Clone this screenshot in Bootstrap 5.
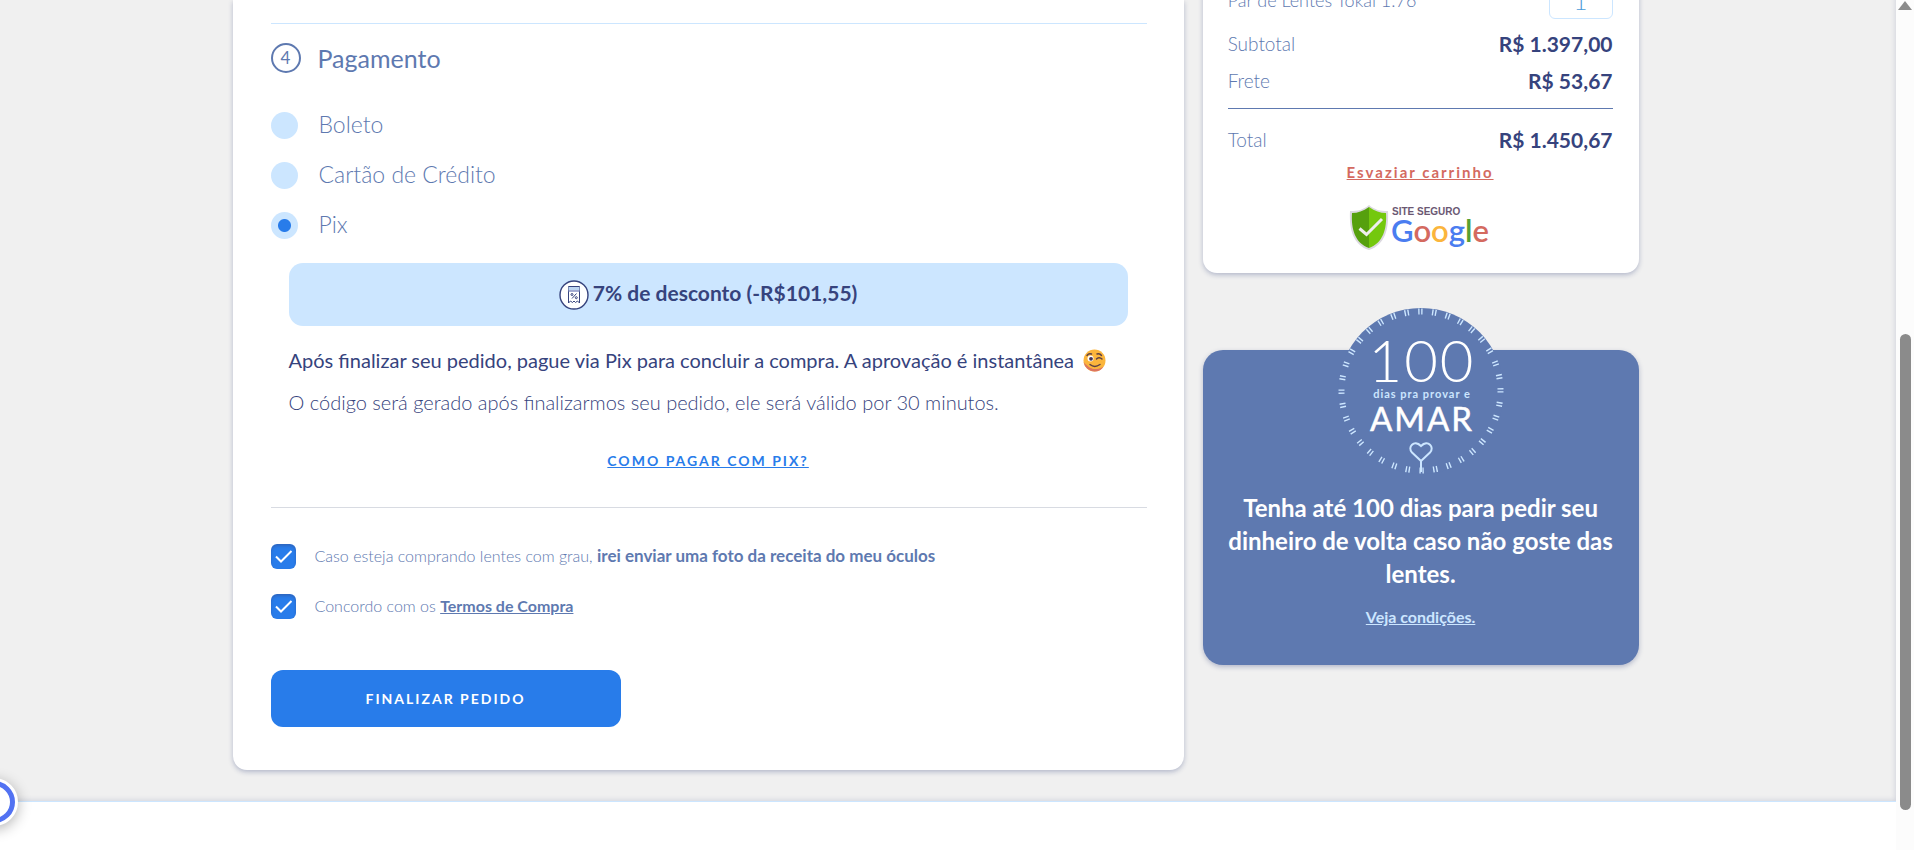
<!DOCTYPE html>
<html lang="pt-BR">
<head>
<meta charset="utf-8">
<meta name="viewport" content="width=device-width, initial-scale=1">
<title>Finalizar pedido</title>
<link href="https://cdn.jsdelivr.net/npm/bootstrap@5.3.0/dist/css/bootstrap.min.css" rel="stylesheet">
<style>
:root { --steel:#5e79b0; --navy:#36437d; --sky:#cce6ff; --action:#287cea; --coral:#d46a5f; }
body { font-family:Lato,"Open Sans",sans-serif; color:var(--steel); background:#fff; overflow:hidden; }
.page { min-height:100vh; }
.checkout { background:#f0f0f0; border-bottom:1px solid var(--sky); box-shadow:inset -4px -4px 5px -3px rgba(54,67,125,.16); padding-bottom:31px; }
.shell { max-width:1431px; padding-right:25px; display:grid; grid-template-columns:minmax(0,1fr) 31%; gap:19px; align-items:start; }
.panel { background:#fff; border-radius:0 0 14px 14px; box-shadow:0 2px 5px rgba(54,67,125,.32); }
.pay { padding:23px 37px 43px 38px; }
.rule { height:1px; margin:0; border:0; opacity:1; background:var(--sky); }
.rule-grey { background:#d8dbe2; margin-top:31px; }
.rule-steel { background:var(--steel); margin-top:9px; margin-bottom:12px; }
.step-title { margin-top:19px; height:30px; gap:17px; }
.step-no { width:30px; height:30px; border:2px solid var(--steel); border-radius:50%; font-size:17px; }
.step-title h2 { font-size:25px; line-height:30px; margin:0; font-weight:400; }
.methods { margin-top:27px; }
.method { height:50px; gap:21px; padding:0; margin:0; min-height:0; }
.method label { font-size:23px; line-height:28px; font-weight:300; padding-bottom:2px; }
.method .form-check-input { width:27px; height:27px; margin:0; float:none; border:0; background-color:var(--sky); }
.method .form-check-input:checked { background-image:radial-gradient(circle, var(--action) 6px, transparent 7px); }
.pix { margin:13px 19px 0 18px; color:var(--navy); }
.discount { height:63px; border-radius:14px; background:var(--sky); font-size:21px; font-weight:700; gap:4px; }
.pix p { font-size:20px; line-height:42px; margin:0; }
.pix .discount + p { margin-top:13px; }
.pix p svg { vertical-align:-4px; }
.how { margin-top:22px; line-height:30px; }
.how a { color:var(--action); font-size:14px; font-weight:700; letter-spacing:2px; }
.terms { margin-top:23px; }
.term { height:50px; gap:19px; padding:0; margin:0; min-height:0; }
.term .form-check-input { width:25px; height:25px; margin:0; float:none; border:0; border-radius:6px; background-color:var(--action); box-shadow:inset 0 2px 3px rgba(54,67,125,.4); }
.term .form-check-input:checked { background-image:url("data:image/svg+xml,%3Csvg xmlns='http://www.w3.org/2000/svg' viewBox='0 0 25 25'%3E%3Cpath d='M5 12.500l5 5L20.500 7' fill='none' stroke='%23fff' stroke-width='2'/%3E%3C/svg%3E"); }
.term label { font-size:16px; font-weight:300; }
.term strong { font-size:17px; font-weight:700; }
.term a { color:inherit; font-weight:700; }
.finish { margin-top:39px; width:350px; max-width:100%; height:57px; border-radius:12px; background:var(--action); color:#fff; font-size:14px; font-weight:700; letter-spacing:2px; }
.finish:hover { background:#1c6cd6; color:#fff; }
.summary { padding:0 26px 21px 25px; }
.cart-line { margin-top:-19px; margin-bottom:6px; height:38px; font-size:18px; font-weight:300; }
.cart-line input { width:64px; height:38px; border:1px solid var(--sky); border-radius:6px; color:#4a9bd8; font-size:24px; font-weight:300; padding:0; text-align:center; }
.sum-line { height:37px; padding-top:1px; }
.sum-line dt { font-size:19px; font-weight:300; }
.sum-line dd { font-size:21px; font-weight:700; color:var(--navy); margin:0; }
.empty-cart { color:var(--coral); font-size:15px; line-height:28px; font-weight:700; letter-spacing:2px; }
.empty-cart:hover { color:#b34f45; }
.seal { margin-top:18px; }
.promise { margin-top:77px; padding:1px 18px 34px; border-radius:20px; background:var(--steel); color:#fff; box-shadow:0 2px 5px rgba(54,67,125,.32); }
.promise svg { margin-top:-43px; }
.promise h3 { margin:17px 0 13px; font-size:24px; line-height:33px; font-weight:700; }
.promise a { color:var(--sky); font-size:16px; line-height:28px; font-weight:700; }
.scroll-track { width:18px; flex:none; background:#fcfcfc; }
.scroll-arrow { width:0; margin-top:1px; border:7px solid transparent; border-top:0; border-bottom:9px solid #8b8b8b; }
.scroll-thumb { width:11px; border-radius:6px; background:#8b8b8b; height:56vh; }
.helper { position:absolute; left:-30px; bottom:24px; width:48px; height:48px; border-radius:50%; border:3px solid #fff; background:#fff; box-shadow:0 3px 14px rgba(0,0,0,.3); padding:0; display:block; }
.helper span { display:block; width:42px; height:42px; border:5px solid #5272f2; border-radius:50%; }
</style>
</head>
<body>
<div class="page d-flex position-relative">
  <div class="flex-grow-1">
    <main class="checkout">
      <div class="shell mx-auto">
        <form class="panel pay" onsubmit="return false">
          <hr class="rule">
          <div class="step-title d-flex align-items-center">
            <span class="step-no d-flex align-items-center justify-content-center">4</span>
            <h2>Pagamento</h2>
          </div>
          <div class="methods">
            <div class="method form-check d-flex align-items-center">
              <input class="form-check-input" type="radio" name="metodo" id="boleto"><label for="boleto">Boleto</label>
            </div>
            <div class="method form-check d-flex align-items-center">
              <input class="form-check-input" type="radio" name="metodo" id="cartao"><label for="cartao">Cartão de Crédito</label>
            </div>
            <div class="method form-check d-flex align-items-center">
              <input class="form-check-input" type="radio" name="metodo" id="pix" checked><label for="pix">Pix</label>
            </div>
          </div>
          <div class="pix">
            <div class="discount d-flex align-items-center justify-content-center">
              <svg width="30" height="30" viewBox="0 0 30 30" fill="none" stroke="#36437d" aria-hidden="true">
                <circle cx="15" cy="15" r="14" fill="#fff" stroke-width="1.4"/>
                <path d="M9.500 23V6.500h11V23l-2-2-2 1.500-1.500-1.500-1.500 1.500-2-1.500z"/>
                <path d="M9.500 7h11v3.500h-11z" fill="#bcd4f1" stroke="none"/>
                <path d="M9.500 11h11" stroke="#8a93c4" stroke-width="1.500"/>
                <path d="M17.500 13.500l-4.500 5"/><circle cx="13" cy="14.500" r="1"/><circle cx="17.300" cy="17.700" r="1"/>
              </svg>
              <span class="pb-1">7% de desconto (-R$101,55)</span>
            </div>
            <p>Após finalizar seu pedido, pague via Pix para concluir a compra. A aprovação é instantânea
              <svg class="ms-1" width="23" height="23" viewBox="0 0 23 23" aria-hidden="true">
                <circle cx="11.500" cy="11.500" r="11" fill="#fbb53c"/>
                <path d="M.7 13a11 11 0 0 0 11 9.500c4 0 7-2 9-5-6 4-14 3-20-4.500z" fill="#dd7560"/>
                <path d="M3.500 12c0 6 5 8 8.500 8 5 0 8-4 8.500-7z" fill="#fbb53c"/>
                <circle cx="7.500" cy="9.500" r="3" fill="#fff"/><circle cx="8" cy="9.800" r="1.900" fill="#443657"/>
                <path d="M13.500 10c1.500-2 4-1.500 5.500 0M4 6.500c1-1.500 3-2 4.500-1.500M14 5c2-.8 3.500 0 4.500 1.500M7 15.500c3 2.500 6.500 2.500 10 0" fill="none" stroke="#5d4045" stroke-width="1.400" stroke-linecap="round"/>
              </svg></p>
            <p class="fw-light">O código será gerado após finalizarmos seu pedido, ele será válido por 30 minutos.</p>
            <div class="how text-center"><a href="#">COMO PAGAR COM PIX?</a></div>
          </div>
          <hr class="rule rule-grey">
          <div class="terms">
            <div class="term form-check d-flex align-items-center">
              <input class="form-check-input" type="checkbox" id="receita" checked>
              <label for="receita">Caso esteja comprando lentes com grau, <strong>irei enviar uma foto da receita do meu óculos</strong></label>
            </div>
            <div class="term form-check d-flex align-items-center">
              <input class="form-check-input" type="checkbox" id="termos" checked>
              <label for="termos">Concordo com os <a href="#">Termos de Compra</a></label>
            </div>
          </div>
          <button class="finish btn border-0" type="submit">FINALIZAR PEDIDO</button>
        </form>

        <aside>
          <section class="panel summary">
            <div class="cart-line d-flex align-items-center justify-content-between">
              <label for="qtd">Par de Lentes Tokai 1.76</label>
              <input id="qtd" type="text" value="1">
            </div>
            <dl class="m-0">
              <div class="sum-line d-flex align-items-center justify-content-between"><dt>Subtotal</dt><dd>R$ 1.397,00</dd></div>
              <div class="sum-line d-flex align-items-center justify-content-between"><dt>Frete</dt><dd>R$ 53,67</dd></div>
            </dl>
            <hr class="rule rule-steel">
            <dl class="m-0">
              <div class="sum-line d-flex align-items-center justify-content-between"><dt>Total</dt><dd>R$ 1.450,67</dd></div>
            </dl>
            <div class="text-center"><a class="empty-cart d-inline-block" href="#">Esvaziar carrinho</a></div>
            <svg class="seal d-block mx-auto" width="144" height="48" viewBox="0 0 144 48" role="img" aria-label="Site seguro Google">
              <path d="M21 1C27 6 32 7 40 7c1 18-3 34-19 39C5 41 1 25 2 7c8 0 13-1 19-6z" fill="#dcd9e0"/>
              <path d="M21 3C15 7 10 9 4 9 3 25 7 39 21 44z" fill="#56a00e"/>
              <path d="M21 3c6 4 11 6 17 6C39 25 35 39 21 44z" fill="#74c80d"/>
              <path d="M11.500 24.500l7 6L34 15" fill="none" stroke="#eee" stroke-width="3"/>
              <text x="44" y="11" font-family="Liberation Sans, sans-serif" font-weight="700" font-size="10" fill="#6b5873">SITE SEGURO</text>
              <text x="43" y="38" font-family="Lato, sans-serif" font-weight="600" font-size="31"><tspan fill="#4a7df0">G</tspan><tspan fill="#d46a5f">o</tspan><tspan fill="#fbb53c">o</tspan><tspan fill="#4a7df0">g</tspan><tspan fill="#56a032">l</tspan><tspan fill="#d46a5f">e</tspan></text>
            </svg>
          </section>

          <section class="promise text-center">
            <svg class="d-block mx-auto" width="166" height="166" viewBox="0 0 166 166" role="img" aria-label="100 dias pra provar e amar">
              <circle cx="83" cy="83" r="83" fill="#5e79b0"/>
              <g fill="none" stroke="#cce6ff" stroke-width="6">
                <circle cx="83" cy="83" r="79.500" pathLength="360" stroke-dasharray="1 1.200 1 6.800" transform="rotate(-92 83 83)"/>
              </g>
              <g fill="#fff" text-anchor="middle" font-family="Lato, sans-serif">
                <text x="84" y="74" font-size="58" font-weight="300" letter-spacing="2">100</text>
                <text x="84" y="90" font-size="11" font-weight="700" letter-spacing="1" fill="#cce6ff">dias pra provar e</text>
                <text x="84" y="123" font-size="33" letter-spacing="2" stroke="#fff" stroke-width=".5">AMAR</text>
              </g>
              <path d="M83 164v-11l-9-8.500c-5-5 2-13.500 9-6.500 7-7 14 1.500 9 6.500l-9 8.500" fill="none" stroke="#cce6ff" stroke-width="2"/>
            </svg>
            <h3>Tenha até 100 dias para pedir seu dinheiro de volta caso não goste das lentes.</h3>
            <a class="d-inline-block" href="#">Veja condições.</a>
          </section>
        </aside>
      </div>
    </main>
  </div>
  <div class="scroll-track d-flex flex-column align-items-center" aria-hidden="true">
    <div class="scroll-arrow"></div>
    <div class="flex-grow-1"></div>
    <div class="scroll-thumb"></div>
    <div class="pb-4 pt-3"></div>
  </div>
  <button class="helper" type="button" aria-label="Ajuda"><span></span></button>
</div>
<script src="https://cdn.jsdelivr.net/npm/bootstrap@5.3.0/dist/js/bootstrap.bundle.min.js"></script>
</body>
</html>
